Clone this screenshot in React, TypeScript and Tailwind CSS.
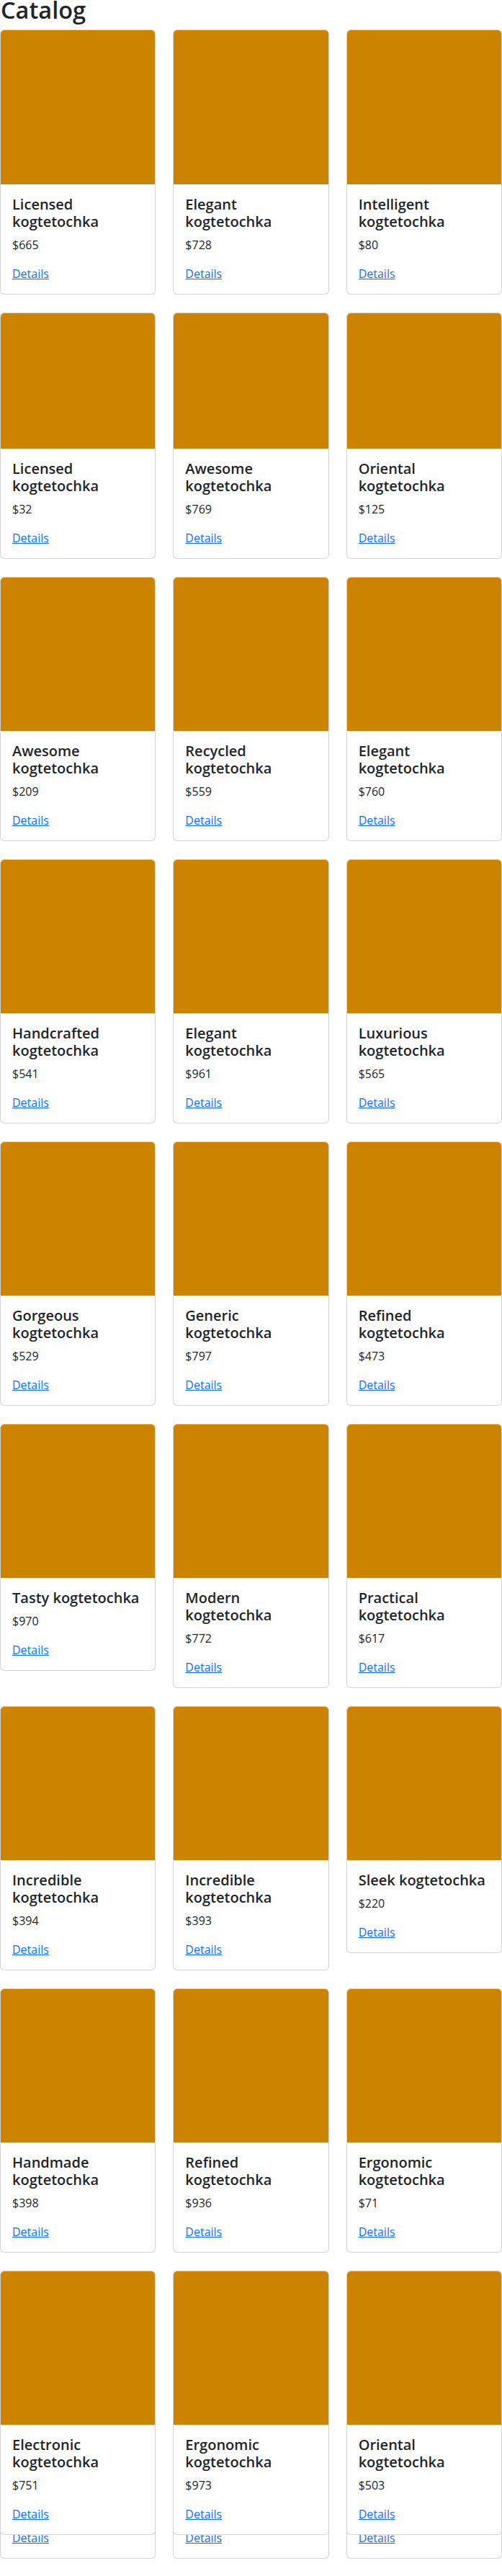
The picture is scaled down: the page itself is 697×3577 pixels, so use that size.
import React from "react";

type Item = { name: string; price: number; oneLine?: boolean };

const rows: { img: number; items: Item[] }[] = [
  { img: 214, items: [{ name: "Licensed", price: 665 }, { name: "Elegant", price: 728 }, { name: "Intelligent", price: 80 }] },
  { img: 188, items: [{ name: "Licensed", price: 32 }, { name: "Awesome", price: 769 }, { name: "Oriental", price: 125 }] },
  { img: 213, items: [{ name: "Awesome", price: 209 }, { name: "Recycled", price: 559 }, { name: "Elegant", price: 760 }] },
  { img: 213, items: [{ name: "Handcrafted", price: 541 }, { name: "Elegant", price: 961 }, { name: "Luxurious", price: 565 }] },
  { img: 213, items: [{ name: "Gorgeous", price: 529 }, { name: "Generic", price: 797 }, { name: "Refined", price: 473 }] },
  { img: 213, items: [{ name: "Tasty", price: 970, oneLine: true }, { name: "Modern", price: 772 }, { name: "Practical", price: 617 }] },
  { img: 213, items: [{ name: "Incredible", price: 394 }, { name: "Incredible", price: 393 }, { name: "Sleek", price: 220, oneLine: true }] },
  { img: 213, items: [{ name: "Handmade", price: 398 }, { name: "Refined", price: 936 }, { name: "Ergonomic", price: 71 }] },
  { img: 213, items: [{ name: "Electronic", price: 751 }, { name: "Ergonomic", price: 973 }, { name: "Oriental", price: 503 }] },
];

function Card({ item, img }: { item: Item; img: number }) {
  return (
    <div className="flex flex-col bg-white border border-[rgba(0,0,0,0.175)] rounded-[6px]">
      <div className="bg-[#cc8400] rounded-t-[5px]" style={{ height: img }} />
      <div className="p-4">
        <h5 className="text-[20px] leading-[24px] font-semibold text-[#212529] mb-2">
          {item.oneLine ? (
            <span className="whitespace-nowrap">{item.name} kogtetochka</span>
          ) : (
            <>
              {item.name}
              <br />
              kogtetochka
            </>
          )}
        </h5>
        <p className="text-[16px] leading-[24px] text-[#212529] mb-4">${item.price}</p>
        <a href="#" className="text-[16px] leading-[24px] text-[#0d6efd] underline">
          Details
        </a>
      </div>
    </div>
  );
}

export default function App() {
  return (
    <div
      className="bg-white min-h-[3577px] pb-6"
      style={{ fontFamily: '"Open Sans", "Noto Sans", Arial, sans-serif' }}
    >
      <h1 className="text-[32.5px] leading-[39px] font-semibold text-[#212529] mt-[-6px] mb-[8px] pl-[1px]">Catalog</h1>
      <div className="grid grid-cols-3 gap-x-6 gap-y-[25px] items-start">
        {rows.map((row, ri) =>
          row.items.map((item, ci) =>
            ri === rows.length - 1 ? (
              <div key={`${ri}-${ci}`} className="relative">
                <div className="pt-[33px]">
                  <Card item={item} img={row.img} />
                </div>
                <div className="absolute left-0 right-0 top-0">
                  <Card item={item} img={row.img} />
                </div>
              </div>
            ) : (
              <Card key={`${ri}-${ci}`} item={item} img={row.img} />
            )
          )
        )}
      </div>
    </div>
  );
}
